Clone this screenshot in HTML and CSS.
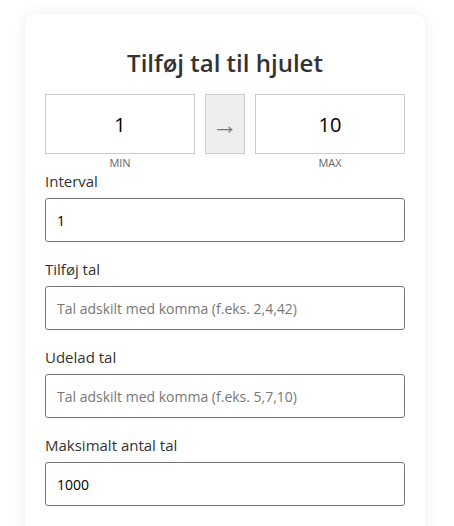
FILE: index.html
```html
<!DOCTYPE html>
<html lang="da">
<head>
  <meta charset="UTF-8" />
  <meta name="viewport" content="width=device-width, initial-scale=1.0"/>
  <title>Tilføj tal til hjulet</title>
  <link rel="stylesheet" href="styles.css">
</head>
<body>
  <div class="card">
    <h2 class="title">Tilføj tal til hjulet</h2>

    <div class="range">
      <div class="range-col">
        <input type="text" class="range-input" value="1" />
        <span class="range-label">MIN</span>
      </div>
      <div class="arrow">&rarr;</div>
      <div class="range-col">
        <input type="text" class="range-input" value="10" />
        <span class="range-label">MAX</span>
      </div>
    </div>

    <div class="field">
      <label>Interval</label>
      <input type="text" value="1" />
    </div>

    <div class="field">
      <label>Tilføj tal</label>
      <input type="text" placeholder="Tal adskilt med komma (f.eks. 2,4,42)" />
    </div>

    <div class="field">
      <label>Udelad tal</label>
      <input type="text" placeholder="Tal adskilt med komma (f.eks. 5,7,10)" />
    </div>

    <div class="field">
      <label>Maksimalt antal tal</label>
      <input type="text" value="1000" />
    </div>
  </div>
</body>
</html>
```

FILE: styles.css
```css
html, body {
  margin: 0;
  padding: 0;
  background: #fff;
  color: #333;
  font-family: 'Open Sans', sans-serif;
  overflow: hidden;
}

.card {
  width: 400px;
  margin: 14px 0 0 25px;
  padding: 30px 20px 20px;
  box-sizing: border-box;
  background: #fff;
  border-radius: 10px;
  box-shadow: 0 0 14px rgba(0, 0, 0, 0.08);
  min-height: 560px;
}

.title {
  margin: 0 0 12px;
  text-align: center;
  font-size: 24px;
  font-weight: 600;
  line-height: 38px;
  color: #333;
}

.range {
  display: flex;
  gap: 10px;
  align-items: flex-start;
}

.range-col {
  display: flex;
  flex-direction: column;
  align-items: center;
  width: 150px;
}

.range-input {
  width: 150px;
  height: 60px;
  box-sizing: border-box;
  border: 1px solid #ccc;
  text-align: center;
  font-family: inherit;
  font-size: 20px;
  color: #000;
  outline: none;
}

.range-label {
  font-size: 11px;
  line-height: 18px;
  color: #666;
}

.arrow {
  width: 40px;
  height: 60px;
  box-sizing: border-box;
  border: 1px solid #ccc;
  background: #eee;
  color: #777;
  display: flex;
  align-items: center;
  justify-content: center;
  font-size: 26px;
}

.field {
  display: flex;
  flex-direction: column;
  margin-bottom: 18px;
}

.field label {
  font-size: 15px;
  line-height: 18px;
  margin-bottom: 8px;
  color: #333;
}

.field input {
  height: 44px;
  box-sizing: border-box;
  border: 1px solid #777;
  border-radius: 3px;
  padding: 0 11px;
  font-family: inherit;
  font-size: 14px;
  color: #000;
  outline: none;
}

.field input::placeholder {
  color: #777;
}
```
